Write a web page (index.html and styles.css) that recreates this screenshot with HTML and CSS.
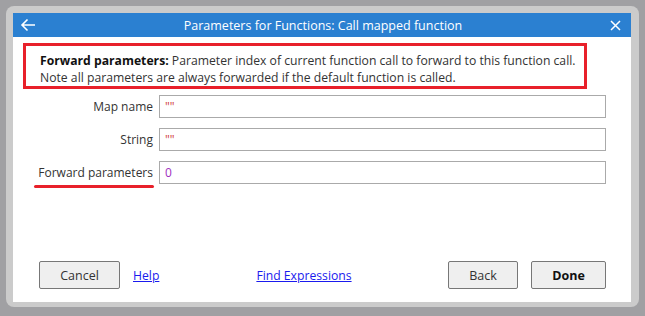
FILE: index.html
```html
<!DOCTYPE html>
<html lang="en">
<head>
  <meta charset="UTF-8" />
  <title>Parameters for Functions: Call mapped function</title>
  <link rel="stylesheet" href="styles.css">
</head>
<body>
  <div class="frame">
    <div class="dialog">
      <div class="titlebar">
        <svg class="back" width="16" height="14" viewBox="0 0 16 14">
          <path d="M15 7H2M7.5 1.5L2 7l5.5 5.5" fill="none" stroke="#fff" stroke-width="1.6"/>
        </svg>
        <span class="title">Parameters for Functions: Call mapped function</span>
        <svg class="close" width="11" height="11" viewBox="0 0 11 11">
          <path d="M1 1l9 9M10 1l-9 9" fill="none" stroke="#fff" stroke-width="1.5"/>
        </svg>
      </div>
      <div class="help-box">
        <b>Forward parameters:</b> Parameter index of current function call to forward to this function call.<br>
        Note all parameters are always forwarded if the default function is called.
      </div>
      <div class="form">
        <div class="row">
          <label>Map name</label>
          <div class="field"><span class="str">""</span></div>
        </div>
        <div class="row">
          <label>String</label>
          <div class="field"><span class="str">""</span></div>
        </div>
        <div class="row">
          <label class="marked">Forward parameters</label>
          <div class="field"><span class="num">0</span></div>
        </div>
      </div>
      <div class="footer">
        <button class="btn cancel">Cancel</button>
        <a href="#" class="link help">Help</a>
        <a href="#" class="link find">Find Expressions</a>
        <button class="btn back-btn">Back</button>
        <button class="btn done">Done</button>
      </div>
    </div>
  </div>
</body>
</html>
```

FILE: styles.css
```css
body {
  margin: 0;
  padding: 6px;
  background: #a0a0a3;
  font-family: 'Open Sans', 'Noto Sans', sans-serif;
  font-size: 12px;
  color: #222;
}
.frame {
  width: 633px;
  height: 301px;
  box-sizing: border-box;
  padding: 7px 8px 5px 7px;
  background: #cbcbcb;
  border-radius: 8px;
}
.dialog {
  height: 100%;
  background: #fff;
  display: flex;
  flex-direction: column;
}
.titlebar {
  height: 24px;
  background: #2b80d1;
  color: #fff;
  display: flex;
  align-items: center;
  padding: 0 10px 0 7px;
}
.title {
  flex: 1;
  text-align: center;
  font-size: 12.5px;
}
.back { display: block; }
.close { display: block; }
.help-box {
  margin: 6px 0 0 10px;
  width: 564px;
  height: 46px;
  box-sizing: border-box;
  border: 3px solid #e8202a;
  padding: 6px 0 0 14px;
  line-height: 17px;
  font-size: 12.2px;
  color: #333;
}
.help-box b { color: #111; }
.form {
  margin-top: 6px;
  display: flex;
  flex-direction: column;
  gap: 10px;
}
.row {
  display: flex;
  align-items: center;
}
.row label {
  width: 140px;
  text-align: right;
  padding-right: 6px;
  color: #333;
  position: relative;
}
.row label.marked::after {
  content: "";
  position: absolute;
  left: 21px;
  right: 5px;
  bottom: -7px;
  height: 3px;
  border-radius: 2px;
  background: #e8202a;
}
.field {
  width: 447px;
  height: 23px;
  box-sizing: border-box;
  border: 1px solid #aaa;
  padding: 0 5px;
  display: flex;
  align-items: center;
}
.str { color: #d04040; }
.num { color: #a030c0; }
.footer {
  margin-top: auto;
  padding: 0 0 13px 26px;
  display: flex;
  align-items: center;
}
.btn {
  height: 28px;
  box-sizing: border-box;
  border: 1px solid #777;
  border-radius: 2px;
  background: #efefef;
  font-family: inherit;
  font-size: 12.5px;
  color: #333;
  padding: 0;
}
.cancel { width: 81px; }
.back-btn { width: 70px; margin-left: auto; }
.done { width: 75px; margin-left: 13px; margin-right: 25px; font-weight: bold; color: #111; }
.link {
  color: #1a1aee;
  text-decoration: underline;
  font-size: 12.2px;
}
.help { margin-left: 13px; }
.find { margin-left: 97px; }
```
